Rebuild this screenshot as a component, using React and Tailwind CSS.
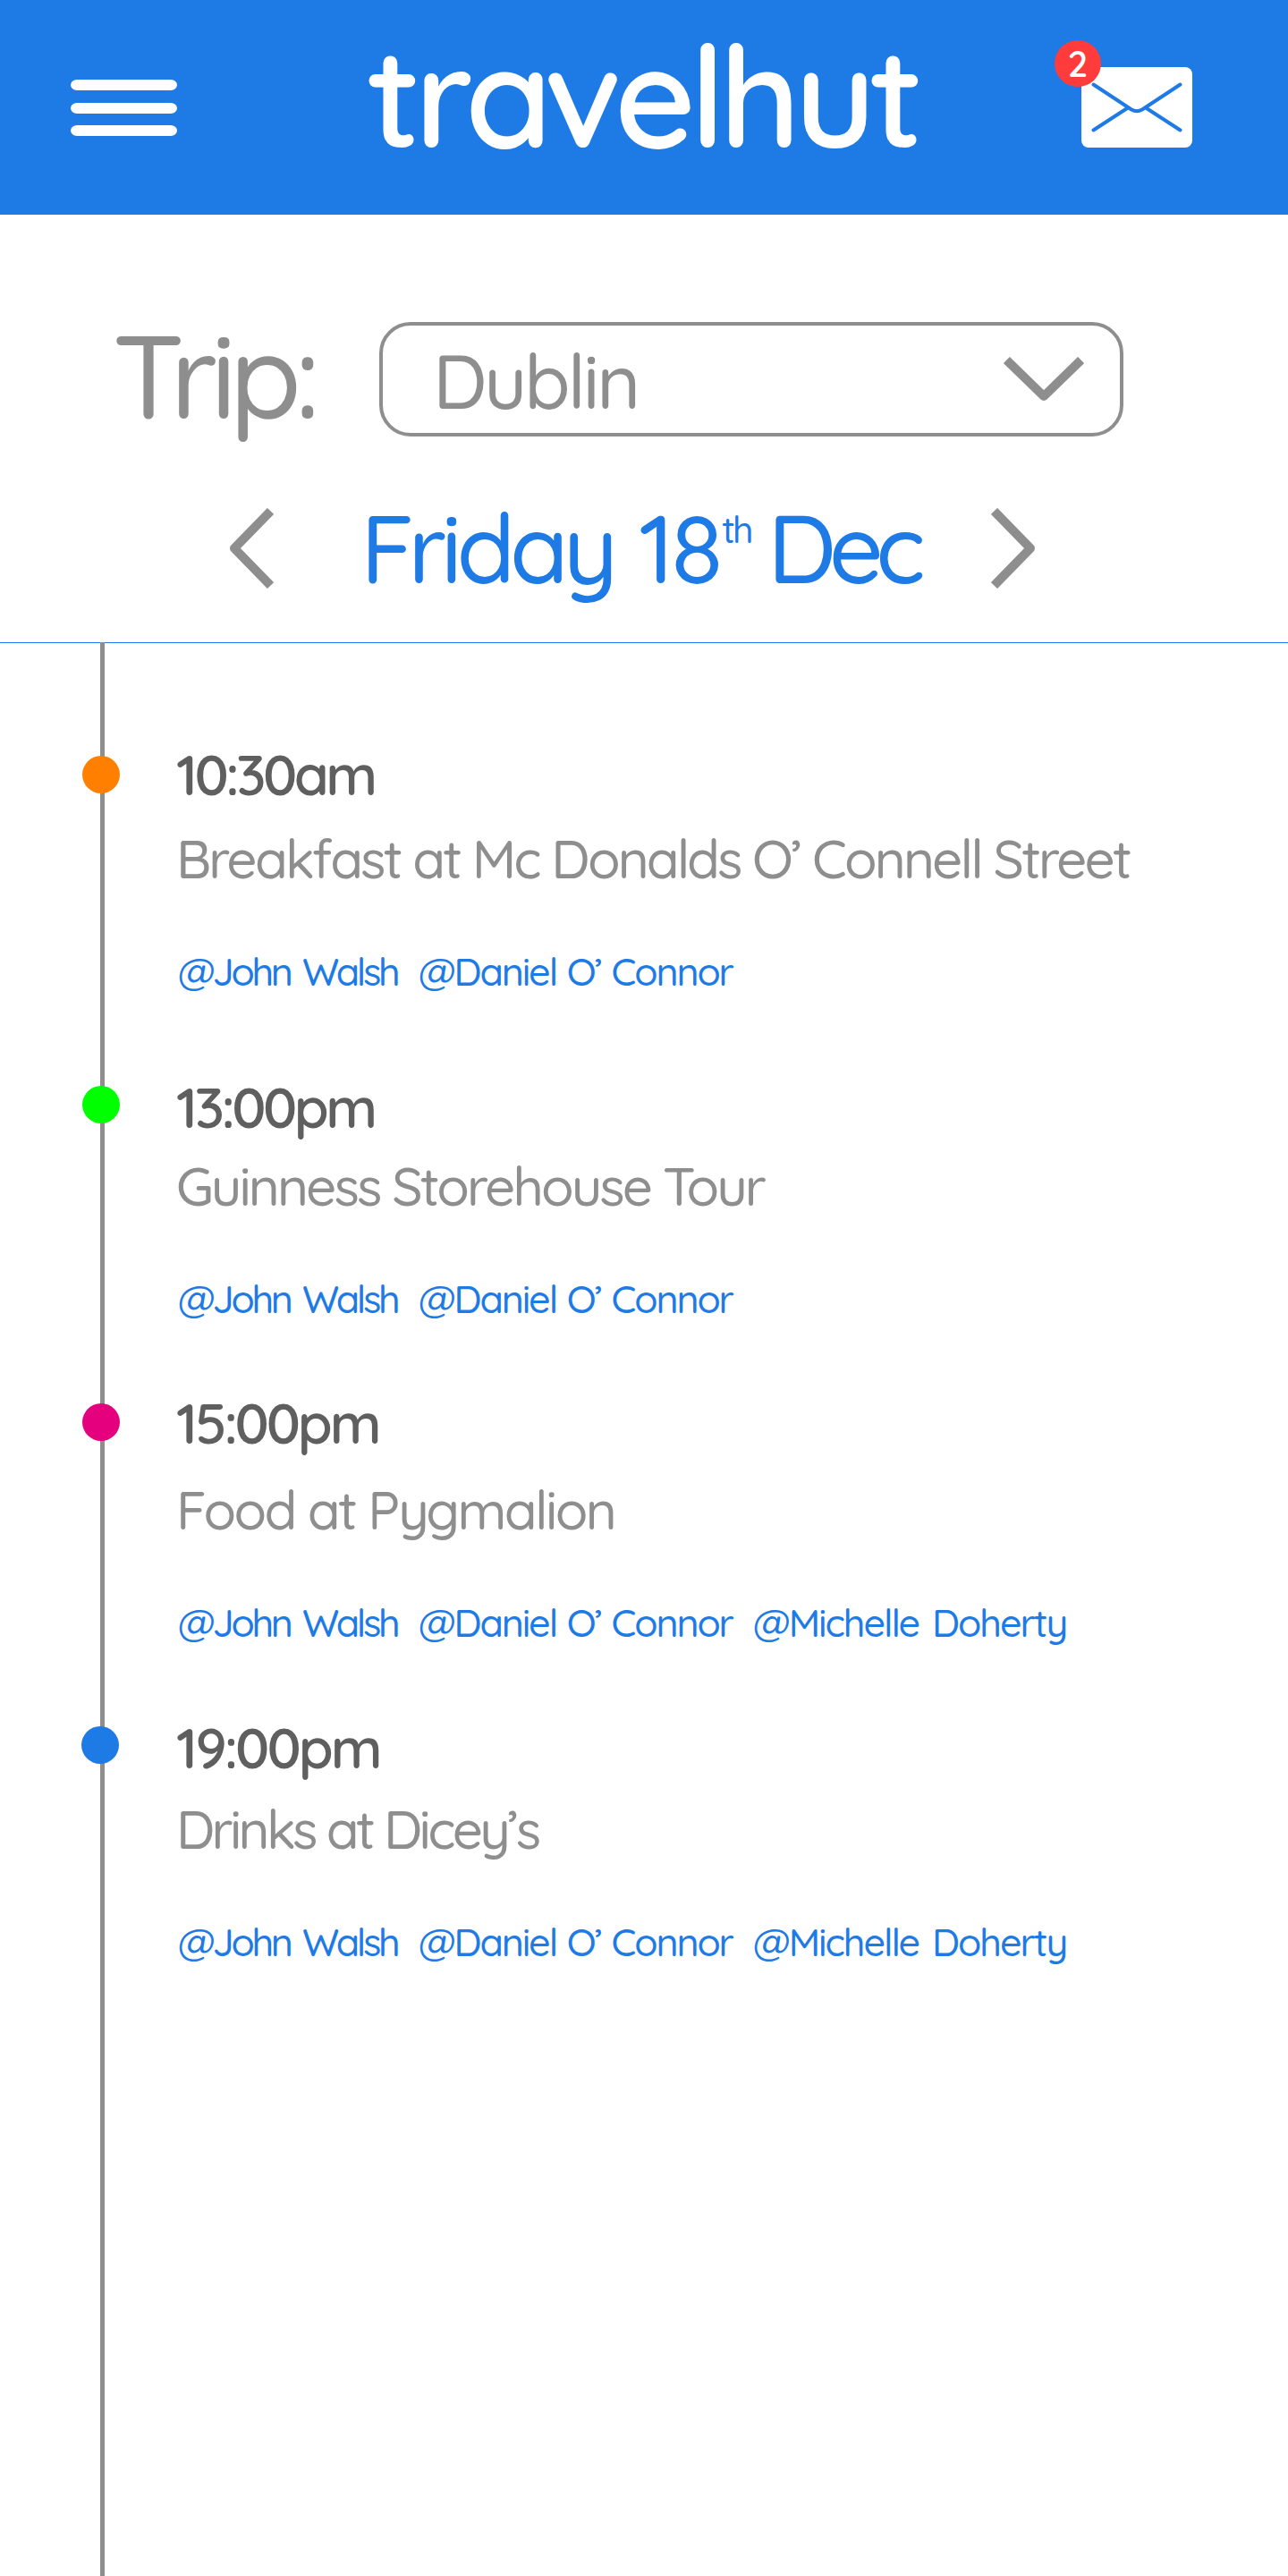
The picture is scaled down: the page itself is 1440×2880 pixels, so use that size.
const events = [
  {
    time: "10:30am",
    timeClass: "tracking-[-3.6px]",
    title: "Breakfast at Mc Donalds O’ Connell Street",
    titleClass: "mt-[14px] tracking-[-2.87px]",
    people: ["john", "daniel"],
    itemClass: "mt-[108px]",
    dotClass: "top-[19px] left-[92px] bg-[#ff8000]",
  },
  {
    time: "13:00pm",
    timeClass: "tracking-[-3.6px]",
    title: "Guinness Storehouse Tour",
    titleClass: "mt-2 tracking-[-2.9px]",
    people: ["john", "daniel"],
    itemClass: "mt-[82px]",
    dotClass: "top-4 left-[92px] bg-[#00ff00]",
  },
  {
    time: "15:00pm",
    timeClass: "tracking-[-3.2px]",
    title: "Food at Pygmalion",
    titleClass: "mt-[17px] tracking-[-2.57px]",
    people: ["john", "daniel", "michelle"],
    itemClass: "mt-[69px]",
    dotClass: "top-[18px] left-[92px] bg-[#e5007d]",
  },
  {
    time: "19:00pm",
    timeClass: "tracking-[-3px]",
    title: "Drinks at Dicey’s",
    titleClass: "mt-[11px] tracking-[-3.6px]",
    people: ["john", "daniel", "michelle"],
    itemClass: "mt-[70px]",
    dotClass: "top-4 left-[91px] bg-[#1e7ae4]",
  },
];

const people = {
  john: { name: "@John Walsh", className: "w-[269px] tracking-[-3.3px] [word-spacing:5px]" },
  daniel: { name: "@Daniel O’ Connor", className: "w-[374px] tracking-[-2.1px] [word-spacing:2px]" },
  michelle: { name: "@Michelle Doherty", className: "tracking-[-2.03px] [word-spacing:5px]" },
};

function MenuIcon() {
  return (
    <div className="mt-[89px] flex h-[63px] w-[119px] flex-col justify-between">
      <span className="h-3 rounded-[7px/6px] bg-white" />
      <span className="h-3 rounded-[7px/6px] bg-white" />
      <span className="h-3 rounded-[7px/6px] bg-white" />
    </div>
  );
}

function Mail() {
  return (
    <div className="relative mt-[75px] h-[90px] w-[124px]">
      <svg viewBox="0 0 124 90" className="h-full w-full" fill="none">
        <rect width="124" height="90" rx="8" fill="#fff" />
        <path
          d="M13.5 19.5 L56 47.5 Q62 51 68 47.5 L110.5 19.5 M13.5 70.5 L52 45.5 M110.5 70.5 L72 45.5"
          stroke="#1e7ae4"
          strokeWidth="4"
          strokeLinecap="round"
        />
      </svg>
      <span className="absolute -top-[30px] -left-[30px] flex h-[52px] w-[52px] items-center justify-center rounded-full bg-[#ff3b3b] text-[40px] leading-[50px] font-semibold text-white">
        2
      </span>
    </div>
  );
}

function Arrow({ d, className, viewBox }) {
  return (
    <svg viewBox={viewBox} className={className} fill="none">
      <path d={d} stroke="#8e8e8e" strokeWidth="10" strokeLinecap="square" strokeLinejoin="round" />
    </svg>
  );
}

function Event({ event }) {
  return (
    <li className={"relative pl-[197px] whitespace-nowrap " + event.itemClass}>
      <span className={"absolute h-[42px] w-[42px] rounded-full " + event.dotClass} />
      <p className={"text-[63px] leading-[80px] font-semibold text-[#5f5f5f] " + event.timeClass}>{event.time}</p>
      <p className={"text-[60px] leading-[80px] font-medium text-[#8e8e8e] " + event.titleClass}>{event.title}</p>
      <p className="mt-14 ml-0.5 flex text-[43px] leading-[60px] font-medium text-[#1e7ae4]">
        {event.people.map((id) => (
          <a key={id} className={people[id].className}>
            {people[id].name}
          </a>
        ))}
      </p>
    </li>
  );
}

export default function App() {
  return (
    <div className="flex h-[2880px] w-[1440px] flex-col overflow-hidden bg-white font-['Quicksand','Comfortaa','Inter',sans-serif]">
      <header className="flex h-60 shrink-0 items-start bg-[#1e7ae4] pl-[79px]">
        <MenuIcon />
        <h1 className="ml-[212px] w-[799px] text-[157px] leading-[212px] font-semibold tracking-[-7.2px] text-white">
          travelhut
        </h1>
        <Mail />
      </header>

      <section className="h-[479px] shrink-0 border-b border-[#1e7ae4] pt-[120px]">
        <div className="flex h-32 items-start pl-[126px] font-medium text-[#8e8e8e]">
          <label className="w-[298px] text-[131px] leading-[118px] tracking-[-7.6px]">Trip:</label>
          <div className="flex h-32 w-[832px] items-start justify-between rounded-[35px] border-4 border-[#8e8e8e] pr-10 pl-[56px]">
            <span className="text-[84px] leading-[123px] tracking-[-3.2px]">Dublin</span>
            <Arrow viewBox="0 0 90 50" className="mt-[35px] h-[50px] w-[90px]" d="M7 7 L45 44 L83 7" />
          </div>
        </div>
        <div className="mt-[60px] flex items-start pl-64">
          <Arrow viewBox="0 0 50 90" className="mt-5 h-[90px] w-[50px]" d="M43 7 L6 45 L43 83" />
          <h2 className="ml-[97px] flex w-[705px] text-[107px] leading-[128px] font-medium whitespace-nowrap text-[#1e7ae4]">
            <span className="w-[311px] tracking-[-6.2px]">Friday</span>
            <span className="w-[93px] tracking-[-4px]">18</span>
            <span className="w-[51px] text-[41px] leading-[88px] tracking-[-3px]">th</span>
            <span className="tracking-[-9px]">Dec</span>
          </h2>
          <Arrow viewBox="0 0 50 90" className="mt-5 h-[90px] w-[50px]" d="M7 7 L44 45 L7 83" />
        </div>
      </section>

      <main className="-mt-px flex grow">
        <div className="ml-[112px] w-[5px] shrink-0 bg-[#8e8e8e]" />
        <ul className="-ml-[117px] flex flex-col">
          {events.map((event) => (
            <Event key={event.time} event={event} />
          ))}
        </ul>
      </main>
    </div>
  );
}
